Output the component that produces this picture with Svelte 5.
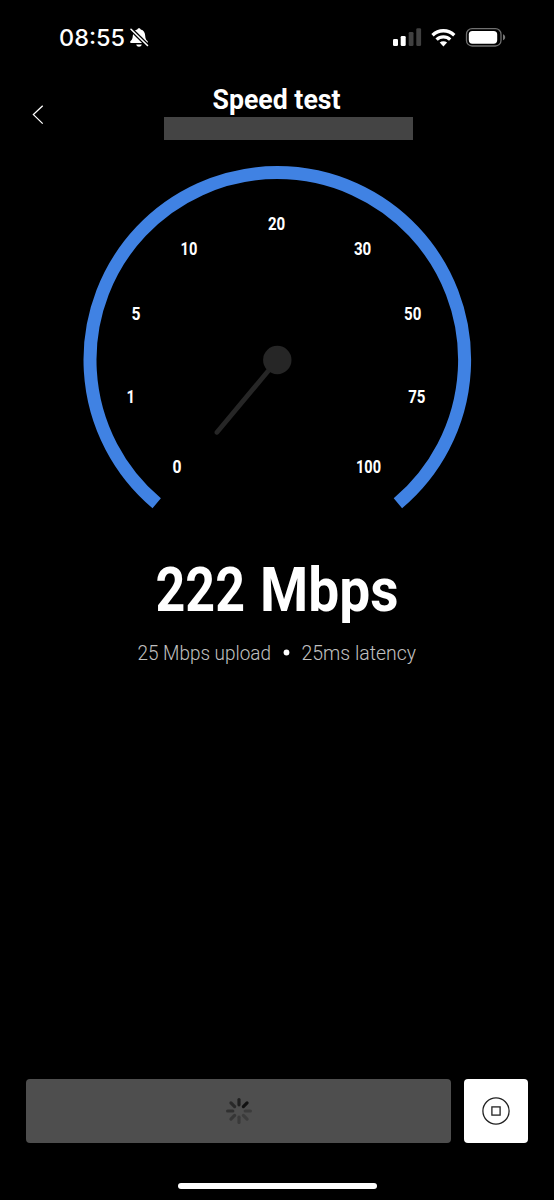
<script>
  const marks = [
    { label: '0', x: 177, y: 473, w: 9 },
    { label: '1', x: 130.7, y: 403, w: 8.5 },
    { label: '5', x: 136, y: 320.4, w: 9 },
    { label: '10', x: 189, y: 254.8, w: 16.8 },
    { label: '20', x: 276.6, y: 229.8, w: 17.3 },
    { label: '30', x: 362.6, y: 254.8, w: 17.3 },
    { label: '50', x: 412.7, y: 320.4, w: 17.3 },
    { label: '75', x: 416.8, y: 403, w: 17.3 },
    { label: '100', x: 368.5, y: 473, w: 25 }
  ];
  const spokes = [0.75, 1, 0.3, 0.28, 0.32, 0.38, 0.48, 0.6];
</script>

<main>
  <header class="status">
    <svg class="clock" width="110" height="40" viewBox="50 18 110 40">
      <text x="59" y="46" textLength="66" lengthAdjust="spacingAndGlyphs">08:55</text>
      <path d="M139 28.3c-.9 0-1.6.6-1.7 1.3-3.1.8-4.3 3.1-4.5 6.1-.2 2.800-.6 3.700-2.200 5.400-.9.9-.7 2 .6 2h15.600c1.300 0 1.500-1.100.6-2-1.600-1.700-2-2.600-2.200-5.400-.2-3-1.400-5.300-4.500-6.100-.1-.7-.8-1.300-1.700-1.300zM136.200 44.500h5.600c-.4 1.500-1.500 2.200-2.800 2.200s-2.400-.7-2.800-2.200z" fill="#fff" />
      <path d="M131 29.300l16.500 16.200" stroke="#000" stroke-width="4" />
      <path d="M131 29.300l16.500 16.200" stroke="#fff" stroke-width="1.600" stroke-linecap="round" />
    </svg>
    <svg class="system" width="130" height="40" viewBox="386 18 130 40">
      <g fill="#fff">
        <rect x="393" y="39" width="5" height="7" rx="1.3" />
        <rect x="400.700" y="36" width="5" height="10" rx="1.300" />
        <g fill="#404040">
          <rect x="408.700" y="32" width="4.800" height="14" rx="1.300" />
          <rect x="416.300" y="28.300" width="4.800" height="17.700" rx="1.300" />
        </g>
      </g>
      <g fill="none" stroke="#fff" stroke-width="3.300">
        <path d="M432.500 35.200a15.600 15.600 0 0 1 21.800 0" />
        <path d="M436.600 39.600a9.700 9.700 0 0 1 13.600 0" />
      </g>
      <path d="M439.700 42.600a5.400 5.400 0 0 1 7.400 0l-3.700 3.800z" fill="#fff" />
      <rect x="466.500" y="28.600" width="34.500" height="17.400" rx="5.600" fill="none" stroke="#707070" stroke-width="1.300" />
      <rect x="468.800" y="31" width="28.400" height="12.700" rx="3.600" fill="#fff" />
      <path d="M503 34.300c2.900.9 2.900 5.100 0 6z" fill="#777" />
    </svg>
  </header>

  <section class="title">
    <button class="back" aria-label="Back">
      <svg width="14" height="22" viewBox="31 104 14 22"><path d="M42.700 105.700l-9.300 8.900 9.300 9" fill="none" stroke="#fff" stroke-width="1.300" /></svg>
    </button>
    <div class="heading">
      <svg width="249" height="36" viewBox="164 81 249 36" role="heading" aria-level="1">
        <text class="bold" x="212.500" y="109.300" font-size="27" textLength="128" lengthAdjust="spacingAndGlyphs">Speed test</text>
      </svg>
      <div class="redacted"></div>
    </div>
  </section>

  <svg class="gauge" width="554" height="380" viewBox="0 140 554 380">
    <path d="M156.700 503.200A187.300 187.300 0 1 1 397.900 503.200" fill="none" stroke="#4082e3" stroke-width="13" />
    <path d="M277.300 360L217 432.300" stroke="#262626" stroke-width="4.800" stroke-linecap="round" />
    <circle cx="277.300" cy="360" r="14.200" fill="#262626" />
    {#each marks as m}
      <text class="bold" x={m.x} y={m.y} font-size="18" text-anchor="middle" textLength={m.w} lengthAdjust="spacingAndGlyphs">{m.label}</text>
    {/each}
  </svg>

  <svg class="result" width="554" height="160" viewBox="0 520 554 160">
    <g class="bold" font-size="60.500">
      <text x="155.500" y="610.500" textLength="89.500" lengthAdjust="spacingAndGlyphs">222</text>
      <text x="260" y="610.500" textLength="138.500" lengthAdjust="spacingAndGlyphs">Mbps</text>
    </g>
    <g class="light">
      <text x="137.500" y="659.500" textLength="133.500" lengthAdjust="spacingAndGlyphs">25 Mbps upload</text>
      <text x="301.500" y="659.500" textLength="114.500" lengthAdjust="spacingAndGlyphs">25ms latency</text>
    </g>
    <circle cx="286.500" cy="652.500" r="2.900" fill="#fff" />
  </svg>

  <footer>
    <div class="actions">
      <button class="loading" aria-label="Loading">
        <svg width="28" height="28" viewBox="-14 -14 28 28">
          {#each spokes as o, i}
            <path d="M0-6.200V-11.400" transform={`rotate(${i * 45})`} stroke="#111" stroke-width="3.200" stroke-linecap="round" opacity={o} />
          {/each}
        </svg>
      </button>
      <button class="stop" aria-label="Stop">
        <svg width="30" height="30" viewBox="-15 -15 30 30" fill="none" stroke="#222" stroke-width="1.300">
          <circle r="13.100" /><rect x="-4.100" y="-4.100" width="8.200" height="8.200" />
        </svg>
      </button>
    </div>
    <div class="home"></div>
  </footer>
</main>

<style>
  :global(body) { margin: 0; background: #000; }
  main { width: 554px; height: 1200px; display: flex; flex-direction: column; background: #000; color: #fff; overflow: hidden; }
  svg { display: block; flex: none; }
  button { border: 0; padding: 0; background: none; }
  text { fill: #fff; }
  .status { height: 40px; padding: 18px 38px 0 50px; display: flex; justify-content: space-between; }
  .clock text { font: 500 23px Inter, sans-serif; }
  .title { height: 59px; margin-top: 23px; display: grid; grid-template-columns: 164px 249px 1fr; }
  .back { justify-self: start; align-self: start; margin: 23px 0 0 31px; }
  .heading { display: flex; flex-direction: column; align-items: center; }
  .redacted { width: 249px; height: 23px; background: #444; }
  .bold { font-family: Roboto, sans-serif; font-weight: 700; }
  .light { font: 300 20.300px Roboto, sans-serif; }
  .light text { fill: #c0c0c0; }
  footer { margin-top: auto; height: 121px; display: flex; flex-direction: column; align-items: center; }
  .actions { display: flex; gap: 13px; width: 502px; height: 64px; }
  .actions button { display: flex; align-items: center; justify-content: center; border-radius: 4px; }
  .loading { flex: 1; background: #4e4e4e; }
  .stop { width: 64px; background: #fff; }
  .home { width: 199px; height: 6px; margin-top: 40px; border-radius: 3px; background: #fff; }
</style>
